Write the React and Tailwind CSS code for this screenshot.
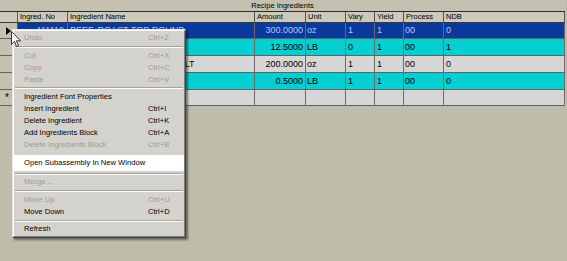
import React from "react";

const W = ["w-[18px]", "w-[50px]", "w-[187px]", "w-[51px]", "w-[40px]", "w-[29px]", "w-[29px]", "w-[40px]", "w-[121px]"];
const HEAD = ["", "Ingred. No", "Ingredient Name", "Amount", "Unit", "Vary", "Yield", "Process", "NDB"];
const ALIGN = ["", "justify-end pr-[3px]", "pl-[2px]", "justify-end pr-[2px]", "pl-[1px]", "pl-[2px]", "pl-[2px]", "pl-[1px]", "pl-[2px]"];

const ROWS = [
  { bg: "bg-[#0c3a9c]", fg: "text-[#b2c8f2]", h: "h-[16px]", ind: "arrow", cells: ["111110", "BEEF, ROAST-TOP ROUND", "300.0000", "oz", "1", "1", "00", "0"] },
  { bg: "bg-[#06cfd2]", fg: "text-black", h: "h-[17px]", ind: "", cells: ["", "", "12.5000", "LB", "0", "1", "00", "1"] },
  { bg: "bg-[#d6d6d6]", fg: "text-black", h: "h-[17px]", ind: "", cells: ["", "SEASONINGS, CELERY SALT", "200.0000", "oz", "1", "1", "00", "0"] },
  { bg: "bg-[#06cfd2]", fg: "text-black", h: "h-[17px]", ind: "", cells: ["", "", "0.5000", "LB", "1", "1", "00", "0"] },
  { bg: "bg-[#d6d6d6]", fg: "text-black", h: "h-[16px]", ind: "star", cells: ["", "", "", "", "", "", "", ""] },
];

const MENU = [
  { t: "Undo", s: "Ctrl+Z", d: true, h: "h-[12px]" },
  { sep: true, h: "h-[6px]" },
  { t: "Cut", s: "Ctrl+X", d: true, h: "h-[12px]" },
  { t: "Copy", s: "Ctrl+C", d: true, h: "h-[12px]" },
  { t: "Paste", s: "Ctrl+V", d: true, h: "h-[11px]" },
  { sep: true, h: "h-[6px]" },
  { t: "Ingredient Font Properties", s: "", h: "h-[12px]" },
  { t: "Insert Ingredient", s: "Ctrl+I", h: "h-[12px]" },
  { t: "Delete Ingredient", s: "Ctrl+K", h: "h-[12px]" },
  { t: "Add Ingredients Block", s: "Ctrl+A", h: "h-[12px]" },
  { t: "Delete Ingredients Block", s: "Ctrl+B", d: true, h: "h-[11px]" },
  { gap: true, h: "h-[5px]" },
  { t: "Open Subassembly In New Window", s: "", h: "h-[16px]", hi: true },
  { sep: true, h: "h-[5px]" },
  { t: "Merge ...", s: "", d: true, h: "h-[12px]" },
  { sep: true, h: "h-[6px]" },
  { t: "Move Up", s: "Ctrl+U", d: true, h: "h-[12px]" },
  { t: "Move Down", s: "Ctrl+D", h: "h-[12px]" },
  { sep: true, h: "h-[5px]" },
  { t: "Refresh", s: "", h: "h-[12px]" },
];

function Indicator({ kind }) {
  if (kind === "arrow")
    return (
      <svg width="5" height="8" viewBox="0 0 5 8" className="ml-[6px]">
        <path d="M0 0 L5 4 L0 8 Z" fill="#000" />
      </svg>
    );
  if (kind === "star")
    return <span className="ml-[5px] text-[10px] leading-none text-black">*</span>;
  return null;
}

export default function App() {
  return (
    <div
      className="relative w-[567px] h-[261px] overflow-hidden bg-[#bfbcab]"
      style={{ fontFamily: '"Liberation Sans", Arial, sans-serif' }}
    >
      <div className="w-[565px]">
        <div className="h-[12px] border-b border-[#2a2a2a] bg-[#c4c1b0] flex items-center justify-center text-[7.5px] text-black leading-none">
          Recipe Ingredients
        </div>
        <div className="flex h-[11px] border-b border-[#3a3a3a] bg-[#cdcabb]">
          {HEAD.map((h, i) => (
            <div
              key={i}
              className={`${W[i]} shrink-0 h-full border-r border-[#555] flex items-center pl-[2px] text-[7.5px] leading-none text-black`}
            >
              {h}
            </div>
          ))}
        </div>
        {ROWS.map((r, ri) => (
          <div key={ri} className={`flex ${r.h} border-b border-[#5c6464]`}>
            <div className={`${W[0]} shrink-0 h-full border-r border-[#555] bg-[#c4c1b0] flex items-center`}>
              <Indicator kind={r.ind} />
            </div>
            {r.cells.map((c, ci) => (
              <div
                key={ci}
                className={`${W[ci + 1]} shrink-0 h-full border-r border-[#6a6a6a] ${r.bg} ${r.fg} flex items-center ${ALIGN[ci + 1]} text-[9px] leading-none whitespace-nowrap overflow-hidden`}
              >
                {c}
              </div>
            ))}
          </div>
        ))}
      </div>

      <div className="absolute left-[12px] top-[29px] w-[174px] h-[209px] bg-[#d4d2cc] border-t border-l border-t-[#e8e8e4] border-l-[#e8e8e4] border-r border-b border-r-[#404040] border-b-[#404040] shadow-[2px_2px_2px_rgba(0,0,0,0.45)]">
        <div className="h-full border-t border-l border-t-white border-l-white border-r border-b border-r-[#808080] border-b-[#808080] pt-[1px]">
          {MENU.map((m, i) => {
            if (m.sep)
              return (
                <div key={i} className={`${m.h} flex items-center px-[1px]`}>
                  <div className="w-full h-[2px] border-t border-[#a4a29c] border-b border-b-white" />
                </div>
              );
            if (m.gap) return <div key={i} className={m.h} />;
            return (
              <div
                key={i}
                className={`${m.h} flex items-center pl-[10px] text-[7.6px] leading-none whitespace-nowrap ${m.hi ? "bg-white" : ""} ${m.d ? "text-[#9c9c98]" : "text-black"}`}
              >
                <span className="w-[124px] shrink-0">{m.t}</span>
                <span>{m.s}</span>
              </div>
            );
          })}
        </div>
      </div>

      <svg className="absolute left-[11px] top-[31px]" width="11" height="17" viewBox="0 0 11 17">
        <path d="M0.5 0.5 L0.5 13.5 L3.5 10.5 L5.7 15.8 L7.6 15 L5.4 9.8 L9.5 9.8 Z" fill="#fff" stroke="#333" strokeWidth="1" strokeLinejoin="miter" />
      </svg>
    </div>
  );
}
